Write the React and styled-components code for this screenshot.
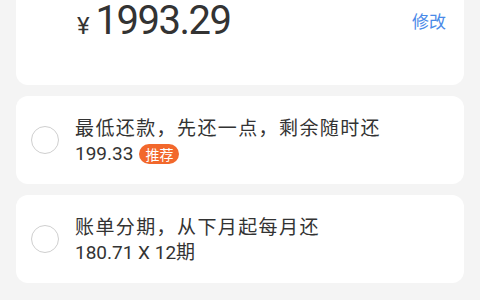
import * as React from "react";
import styled, { createGlobalStyle } from "styled-components";

const GlobalStyle = createGlobalStyle`
  html, body {
    margin: 0;
    padding: 0;
    background: #f4f4f4;
  }
  body {
    font-family: Roboto, "Noto Sans CJK SC", sans-serif;
    color: #333;
  }
`;

const Page = styled.div`
  width: 480px;
  height: 300px;
  overflow: hidden;
  background: #f4f4f4;
  padding: 0 16px;
  box-sizing: border-box;
  display: flex;
  flex-direction: column;
  gap: 11px;
`;

const AmountCard = styled.div`
  background: #fff;
  border-radius: 0 0 12px 12px;
  height: 85px;
  box-sizing: border-box;
  padding: 0 18px 0 61px;
  display: flex;
  align-items: flex-start;
  justify-content: space-between;
`;

const Amount = styled.div`
  display: flex;
  align-items: baseline;
  color: #333;
`;

const Yen = styled.span`
  font: 400 24px/1 Roboto, sans-serif;
  margin-right: 6px;
`;

const Big = styled.span`
  font: 400 40px/42px Roboto, sans-serif;
  letter-spacing: -1.5px;
`;

const Edit = styled.span`
  margin-top: 10px;
  color: #4a8ae8;
  font: 400 17px/22px "Noto Sans CJK SC", sans-serif;
`;

const OptionCard = styled.div`
  background: #fff;
  border-radius: 12px;
  height: 88px;
  box-sizing: border-box;
  padding: 0 15px;
  display: flex;
  align-items: center;
  gap: 16px;
`;

const Radio = styled.span`
  width: 26px;
  height: 26px;
  border-radius: 50%;
  border: 1px solid #cfcfcf;
  flex: none;
`;

const Texts = styled.div`
  display: flex;
  flex-direction: column;
  gap: 3px;
`;

const Title = styled.div`
  font: 400 19px/24px "Noto Sans CJK SC", sans-serif;
  letter-spacing: 1.4px;
  color: #333;
`;

const Sub = styled.div`
  display: flex;
  align-items: center;
  gap: 6px;
  font: 400 19px/24px Roboto, "Noto Sans CJK SC", sans-serif;
  color: #333;
`;

const Badge = styled.span`
  background: #f2682c;
  color: #fff;
  border-radius: 10px;
  padding: 0 6px;
  height: 20px;
  font: 400 14px/20px "Noto Sans CJK SC", sans-serif;
`;

export default function App() {
  return (
    <>
      <GlobalStyle />
      <Page>
        <AmountCard>
          <Amount>
            <Yen>¥</Yen>
            <Big>1993.29</Big>
          </Amount>
          <Edit>修改</Edit>
        </AmountCard>
        <OptionCard>
          <Radio />
          <Texts>
            <Title>最低还款，先还一点，剩余随时还</Title>
            <Sub>
              199.33<Badge>推荐</Badge>
            </Sub>
          </Texts>
        </OptionCard>
        <OptionCard>
          <Radio />
          <Texts>
            <Title>账单分期，从下月起每月还</Title>
            <Sub>180.71 X 12期</Sub>
          </Texts>
        </OptionCard>
      </Page>
    </>
  );
}
